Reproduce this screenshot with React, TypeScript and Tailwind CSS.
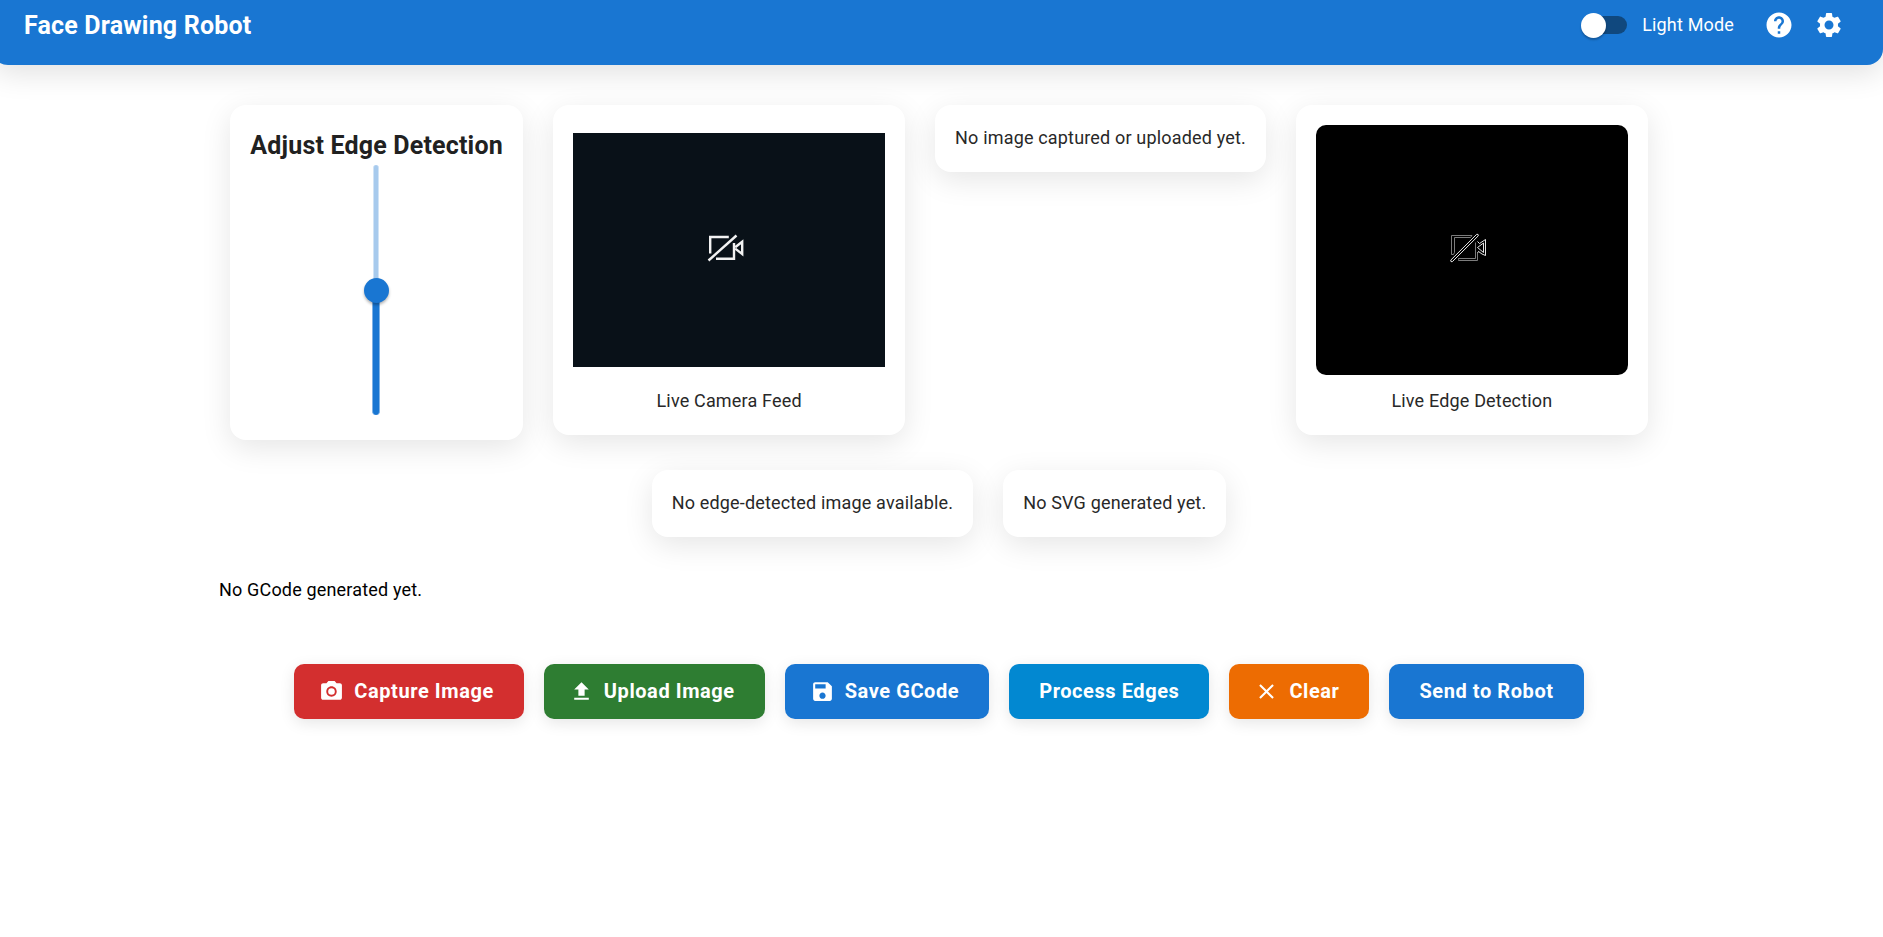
import type { ReactNode } from 'react';

function Icon({ path, className }: { path: string; className: string }) {
  return (
    <svg viewBox="0 0 24 24" fill="currentColor" className={className} aria-hidden="true">
      <path d={path} />
    </svg>
  );
}

const icons = {
  help: 'M12 2C6.48 2 2 6.48 2 12s4.48 10 10 10 10-4.48 10-10S17.52 2 12 2zm1 17h-2v-2h2v2zm2.07-7.75-.9.92C13.45 12.9 13 13.5 13 15h-2v-.5c0-1.1.45-2.1 1.17-2.83l1.24-1.26c.37-.36.59-.86.59-1.41 0-1.1-.9-2-2-2s-2 .9-2 2H8c0-2.21 1.79-4 4-4s4 1.79 4 4c0 .88-.36 1.68-.93 2.25z',
  settings:
    'M19.14 12.94c.04-.3.06-.61.06-.94 0-.32-.02-.64-.07-.94l2.03-1.58c.18-.14.23-.41.12-.61l-1.92-3.32c-.12-.22-.37-.29-.59-.22l-2.39.96c-.5-.38-1.03-.7-1.62-.94l-.36-2.54c-.04-.24-.24-.41-.48-.41h-3.84c-.24 0-.43.17-.47.41l-.36 2.54c-.59.24-1.13.57-1.62.94l-2.39-.96c-.22-.08-.47 0-.59.22L2.74 8.87c-.12.21-.08.47.12.61l2.03 1.58c-.05.3-.09.63-.09.94s.02.64.07.94l-2.03 1.58c-.18.14-.23.41-.12.61l1.92 3.32c.12.22.37.29.59.22l2.39-.96c.5.38 1.03.7 1.62.94l.36 2.54c.05.24.24.41.48.41h3.84c.24 0 .44-.17.47-.41l.36-2.54c.59-.24 1.13-.56 1.62-.94l2.39.96c.22.08.47 0 .59-.22l1.92-3.32c.12-.22.07-.47-.12-.61l-2.01-1.58zM12 15.6c-1.98 0-3.6-1.62-3.6-3.6s1.62-3.6 3.6-3.6 3.6 1.62 3.6 3.6-1.62 3.6-3.6 3.6z',
  camera:
    'M12 8.8a3.2 3.2 0 1 0 0 6.4 3.2 3.2 0 0 0 0-6.4zM9 2 7.17 4H4c-1.1 0-2 .9-2 2v12c0 1.1.9 2 2 2h16c1.1 0 2-.9 2-2V6c0-1.1-.9-2-2-2h-3.17L15 2H9zm3 15c-2.76 0-5-2.24-5-5s2.24-5 5-5 5 2.24 5 5-2.24 5-5 5z',
  upload: 'M5 20h14v-2H5v2zm0-10h4v6h6v-6h4l-7-7-7 7z',
  save: 'M17 3H5c-1.11 0-2 .9-2 2v14c0 1.1.89 2 2 2h14c1.1 0 2-.9 2-2V7l-4-4zm-5 16c-1.66 0-3-1.34-3-3s1.34-3 3-3 3 1.34 3 3-1.34 3-3 3zm3-10H5V5h10v4z',
  clear:
    'M19 6.41 17.59 5 12 10.59 6.41 5 5 6.41 10.59 12 5 17.59 6.41 19 12 13.41 17.59 19 19 17.59 13.41 12z',
};

function Card({ children, className = 'px-5 pt-5 pb-[22px]' }: { children: ReactNode; className?: string }) {
  return (
    <section
      className={`rounded-2xl bg-white text-center shadow-[0_8px_30px_rgba(0,0,0,0.1)] ${className}`}
    >
      {children}
    </section>
  );
}

function ActionButton({ label, icon, color }: { label: string; icon?: string; color: string }) {
  return (
    <button
      className={`flex h-[55px] items-center gap-2.5 rounded-[10px] pr-[30px] text-[20px] font-bold tracking-[0.02857em] text-white shadow-[0_4px_15px_rgba(0,0,0,0.1)] ${icon ? 'pl-[25px]' : 'pl-[30px]'} ${color}`}
    >
      {icon && <Icon path={icon} className="size-[25px]" />}
      {label}
    </button>
  );
}

function Header() {
  return (
    <header className="-ml-2 flex h-[65px] items-start justify-between rounded-b-2xl bg-[#1976d2] pr-[39px] pl-8 text-white shadow-[0_8px_30px_rgba(0,0,0,0.12)]">
      <h1 className="mt-2 text-[25px] leading-[35px] font-bold tracking-[0.0075em]">
        Face Drawing Robot
      </h1>
      <div className="mt-2.5 flex items-center">
        <button className="flex h-[18px] w-[46px] items-center pl-1" aria-label="Toggle theme">
          <span className="flex h-[18px] w-full items-center rounded-full bg-[#10487e]">
            <span className="-ml-1 size-[25px] shrink-0 rounded-full bg-white shadow-[0_2px_2px_rgba(0,0,0,0.25)]" />
          </span>
        </button>
        <span className="mb-px ml-[15px]">Light Mode</span>
        <Icon path={icons.help} className="ml-[30px] size-[30px]" />
        <Icon path={icons.settings} className="ml-5 size-[30px]" />
      </div>
    </header>
  );
}

function EdgeSlider() {
  return (
    <div className="ml-[133px] flex h-[250px] w-[26px] flex-col items-center">
      <div className="-mb-3 h-[125px] w-[6px] shrink-0 rounded-t-full border-x border-[#d0e3f6] bg-[#a7caed]" />
      <div className="z-10 size-[25px] shrink-0 rounded-full bg-[#1976d2] shadow-[0_2px_3px_rgba(0,0,0,0.3)]" />
      <div className="-mt-3 w-[8px] flex-1 rounded-b-full border-x border-[#7fb2e6] bg-[#1976d2]" />
    </div>
  );
}

function CameraOff() {
  return (
    <svg viewBox="0 0 312 234" className="h-[234px] w-[312px]" fill="none">
      <g stroke="#f2f2f2" strokeWidth="2.4">
        <path d="M137.2 120.5V104H155.8" />
        <path d="M143 125.8H161V110" />
        <path d="M135.5 127.5L163.5 102.5" />
        <path d="M162.2 114.3L169.2 108.8V121L162.2 115.6" />
      </g>
    </svg>
  );
}

function CameraEdges() {
  return (
    <svg viewBox="0 0 312 250" className="h-[250px] w-[312px]" fill="none">
      <g stroke="#8a8a8a" strokeWidth="0.9">
        <path d="M156 110.5H135.5V129.5H137.5L138.5 127.5V112.5H154.5L156 110.5" />
        <path d="M142.5 134.5V133.5H159.5V117.5M142.5 134.5V135.5H161.5V128" />
      </g>
      <g stroke="#ffffff" strokeWidth="0.9">
        <path d="M134.7 135.2L160.6 109.4Q162.5 108.6 162.3 110.8L136.4 136.6Q134.6 137.4 134.7 135.2Z" />
        <path d="M161.5 116.5L163.5 118.5L169.5 114.5V130.5L166 129L162.5 126.5L161.5 128" />
        <path d="M161.5 122.5L167.5 118V127.5Z" />
      </g>
    </svg>
  );
}

export default function App() {
  return (
    <div className="min-h-screen overflow-x-hidden bg-white font-[Roboto,sans-serif] text-[18px] leading-[25px] tracking-[0.00938em] text-black">
      <Header />
      <main className="pr-[5px]">
        <div className="mx-auto max-w-[1440px] pt-10">
          <div className="flex flex-wrap items-start justify-center gap-[30px] text-[#282828]">
            <Card className="h-[335px] w-[293px] pt-[22px]">
              <h2 className="mb-px text-[25px] leading-[37px] font-bold tracking-[0.0075em] text-[#212121]">
                Adjust Edge Detection
              </h2>
              <EdgeSlider />
            </Card>
            <Card>
              <div className="mb-[13px] flex h-[250px] w-[312px] items-center">
                <div className="bg-[#091118]">
                  <CameraOff />
                </div>
              </div>
              Live Camera Feed
            </Card>
            <Card>No image captured or uploaded yet.</Card>
            <Card>
              <div className="mb-[13px] overflow-hidden rounded-[10px] bg-black">
                <CameraEdges />
              </div>
              Live Edge Detection
            </Card>
            <Card>No edge-detected image available.</Card>
            <Card>No SVG generated yet.</Card>
          </div>
          <p className="mt-10">No GCode generated yet.</p>
          <div className="mt-[62px] flex justify-center gap-5">
            <ActionButton label="Capture Image" icon={icons.camera} color="bg-[#d32f2f]" />
            <ActionButton label="Upload Image" icon={icons.upload} color="bg-[#2e7d32]" />
            <ActionButton label="Save GCode" icon={icons.save} color="bg-[#1976d2]" />
            <ActionButton label="Process Edges" color="bg-[#0288d1]" />
            <ActionButton label="Clear" icon={icons.clear} color="bg-[#ed6c02]" />
            <ActionButton label="Send to Robot" color="bg-[#1976d2]" />
          </div>
        </div>
      </main>
    </div>
  );
}
